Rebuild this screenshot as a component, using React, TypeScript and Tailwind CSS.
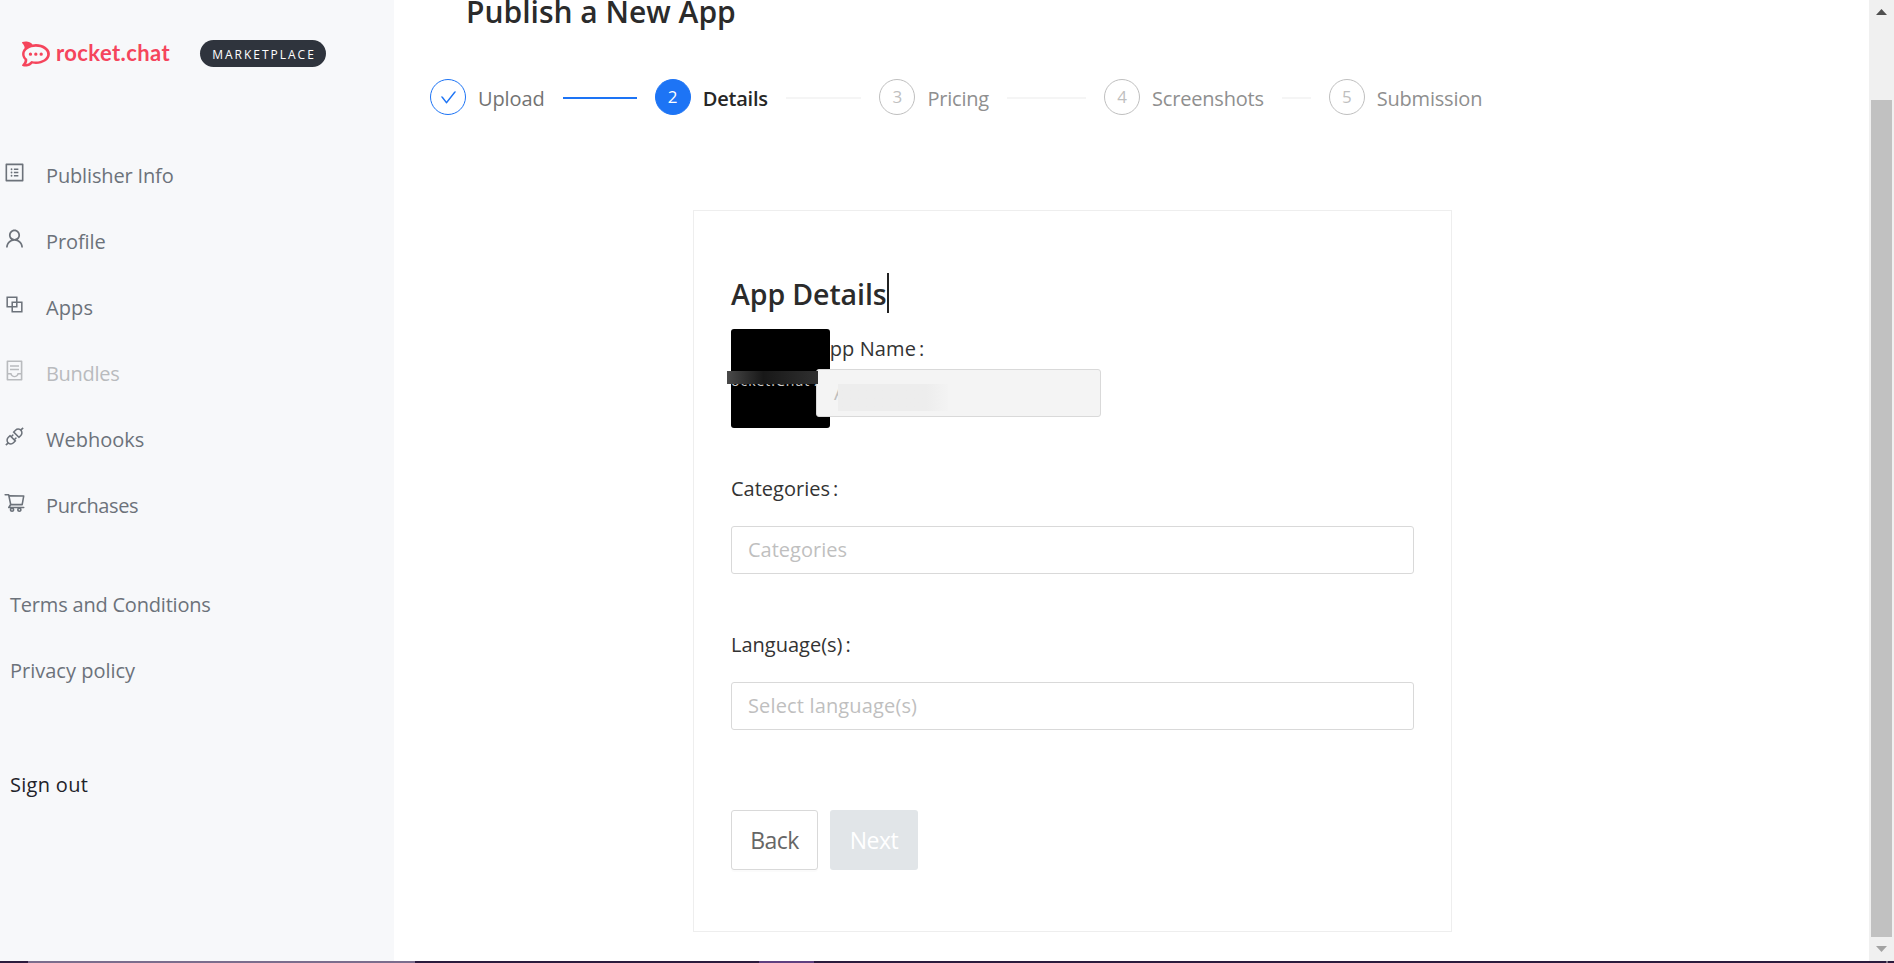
import type { ReactNode } from "react";
import {
  AiOutlineApi,
  AiOutlineBlock,
  AiOutlineCheck,
  AiOutlineContainer,
  AiOutlineProfile,
  AiOutlineShoppingCart,
  AiOutlineUser,
} from "react-icons/ai";
import { FaRocketchat } from "react-icons/fa";

const nav = [
  { label: "Publisher Info", Icon: AiOutlineProfile, tracking: "tracking-[-0.15px]" },
  { label: "Profile", Icon: AiOutlineUser, tracking: "tracking-[-0.1px]" },
  { label: "Apps", Icon: AiOutlineBlock, tracking: "tracking-[0.1px]" },
  { label: "Bundles", Icon: AiOutlineContainer, disabled: true, tracking: "tracking-[-0.3px]" },
  { label: "Webhooks", Icon: AiOutlineApi, tracking: "" },
  { label: "Purchases", Icon: AiOutlineShoppingCart, tracking: "tracking-[-0.4px]" },
];

function Sidebar() {
  return (
    <aside className="flex w-[394px] shrink-0 flex-col bg-[#f7f8fa] text-[20px] text-[#6c727a]">
      <div className="flex h-[143px] items-start pt-10">
        <div className="flex h-[27px] items-center pl-[22px] text-[#f5455c]">
          <FaRocketchat className="size-7" />
          <span className="-mt-[3px] ml-[6px] font-['Lato',sans-serif] text-[22px] leading-[25px] font-bold tracking-[0.4px]">
            rocket.chat
          </span>
        </div>
        <span className="mr-[68px] ml-auto flex h-[27px] w-[126px] items-center justify-center rounded-full bg-[#2f343d] pt-[2px] pl-[2px] text-[12px] tracking-[2px] text-white">
          MARKETPLACE
        </span>
      </div>
      <nav className="flex flex-col">
        {nav.map(({ label, Icon, disabled, tracking }) => (
          <a key={label} className={disabled ? "flex h-[66px] items-center text-[#b9bbbe]" : "flex h-[66px] items-center"}>
            <Icon className="mb-2 ml-[3px] size-[23px]" />
            <span className={`ml-5 ${tracking}`}>{label}</span>
          </a>
        ))}
      </nav>
      <div className="mt-[33px] flex flex-col pl-[10px]">
        <a className="flex h-[66px] items-center tracking-[-0.2px]">Terms and Conditions</a>
        <a className="flex h-[66px] items-center">Privacy policy</a>
        <a className="mt-12 flex h-[66px] items-center tracking-[0.3px] text-[#1f2329]">Sign out</a>
      </div>
    </aside>
  );
}

type StepState = "done" | "active" | "todo";

const circleStyle: Record<StepState, string> = {
  done: "border-[#1d74f5] text-[#1d74f5]",
  active: "border-[#1d74f5] bg-[#1d74f5] text-white",
  todo: "border-[#bfbfbf] text-[#bfbfbf]",
};
const titleStyle: Record<StepState, string> = {
  done: "text-[#737373] tracking-[-0.1px]",
  active: "font-semibold text-[#262626] tracking-[-0.2px]",
  todo: "text-[#8f8f8f] tracking-[-0.2px]",
};

function Step({ n, title, state, last }: { n: number; title: string; state: StepState; last?: boolean }) {
  return (
    <li className={last ? "flex h-[38px] items-center" : "flex h-[38px] w-[224.7px] items-center"}>
      <span
        className={`mb-[2px] flex size-9 shrink-0 items-center justify-center rounded-full border text-[17px] ${circleStyle[state]}`}
      >
        {state === "done" ? <AiOutlineCheck className="size-[19px]" /> : n}
      </span>
      <span className={`ml-3 pt-px whitespace-nowrap ${titleStyle[state]}`}>{title}</span>
      {!last && (
        <span
          className={
            state === "done" ? "mr-[18px] ml-[18px] h-[2px] flex-1 bg-[#1d74f5]" : "mr-[18px] ml-[18px] h-[2px] flex-1 bg-[#f5f5f5]"
          }
        />
      )}
    </li>
  );
}

function Label({ children }: { children: ReactNode }) {
  return (
    <label className="flex h-10 items-center text-[#333]">
      {children}
      <span className="ml-[3px]">:</span>
    </label>
  );
}

function Field({ placeholder, tracking }: { placeholder: string; tracking: string }) {
  return (
    <div
      className={`flex h-[48px] w-[683px] items-center rounded-[3px] border border-[#d9d9d9] bg-white pl-[16px] text-[#bfbfbf] ${tracking}`}
    >
      {placeholder}
    </div>
  );
}

function DetailsCard() {
  return (
    <section className="mt-[93px] ml-[299px] flex h-[722px] w-[759px] flex-col border border-[#eeeeee] pl-[37px]">
      <h2 className="mt-[62px] flex h-10 items-center text-[28.5px] font-semibold text-[#2b2b2b]">
        <span className="pt-[2px] tracking-[-0.1px]">App Details</span>
        <span className="h-10 w-[2px] bg-[#222]" />
      </h2>
      <div className="relative mt-4 flex h-[99px]">
        <div className="relative z-10 size-[99px] shrink-0 overflow-hidden rounded-[3px] bg-black">
          <span className="absolute top-[42px] left-0 text-[14px] leading-5 tracking-[1px] whitespace-nowrap text-white/80">
            ocket.Chat A
          </span>
        </div>
        <div className="-ml-[14px] flex flex-col">
          <Label>
            <span className="ml-px tracking-[0.1px]">App Name</span>
          </Label>
          <div className="relative z-20 flex h-[48px] w-[285px] items-center rounded-[3px] border border-[#d9d9d9] bg-[#f4f4f4] pl-[17px] text-[#bfbfbf]">
            A
            <span className="absolute top-[14px] left-[21px] h-[27px] w-[110px] bg-linear-to-r from-[#ededed] from-80% to-[#f3f3f3]" />
          </div>
        </div>
        <span className="absolute top-[42px] -left-1 z-30 h-[13px] w-[91px] bg-linear-to-r from-[#4a4a4a] via-[#181818] via-40% to-[#303030]" />
      </div>
      <div className="mt-[41px] flex flex-col gap-[17px]">
        <Label>Categories</Label>
        <Field placeholder="Categories" tracking="" />
      </div>
      <div className="mt-[51px] flex flex-col gap-[17px]">
        <Label>Language(s)</Label>
        <Field placeholder="Select language(s)" tracking="tracking-[0.15px]" />
      </div>
      <div className="mt-20 flex gap-3 text-[23px] tracking-[-0.5px]">
        <button className="h-[60px] w-[87px] rounded-[3px] border border-[#d9d9d9] bg-white text-[#666] shadow-[0_2px_0_rgba(0,0,0,0.015)]">
          Back
        </button>
        <button className="h-[60px] w-[88px] rounded-[3px] bg-[#e1e5e8] text-white">Next</button>
      </div>
    </section>
  );
}

function Scrollbar() {
  return (
    <div className="flex w-[25px] shrink-0 flex-col items-center bg-[#f0f0f0]">
      <div className="flex h-[100px] items-start pt-[9px]">
        <svg width="11" height="6" viewBox="0 0 11 6" fill="#505050">
          <path d="M5.5 0 11 6H0z" />
        </svg>
      </div>
      <div className="h-[837px] w-[21px] bg-[#c1c1c1]" />
      <svg className="mt-[9px]" width="11" height="6" viewBox="0 0 11 6" fill="#a3a3a3">
        <path d="M0 0h11L5.5 6z" />
      </svg>
    </div>
  );
}

export default function App() {
  return (
    <div className="flex h-[963px] w-[1894px] flex-col overflow-hidden bg-white font-['Open_Sans',sans-serif]">
      <div className="flex h-[961px]">
        <Sidebar />
        <main className="flex flex-1 flex-col text-[20px]">
          <h1 className="flex h-8 items-start pl-[72px] text-[30px] leading-6 font-semibold text-[#2b2b2b]">
            Publish a New App
          </h1>
          <ol className="mt-[47px] ml-9 flex">
            <Step n={1} title="Upload" state="done" />
            <Step n={2} title="Details" state="active" />
            <Step n={3} title="Pricing" state="todo" />
            <Step n={4} title="Screenshots" state="todo" />
            <Step n={5} title="Submission" state="todo" last />
          </ol>
          <DetailsCard />
        </main>
        <Scrollbar />
      </div>
      <div className="flex h-[2px] bg-[#2b1b3d]">
        <span className="ml-7 w-[387px] bg-[#7b6d8d]" />
        <span className="ml-[344px] w-[55px] bg-[#5f4080]" />
        <span className="ml-[1072px] w-[2px] bg-[#7b7484]" />
      </div>
    </div>
  );
}
